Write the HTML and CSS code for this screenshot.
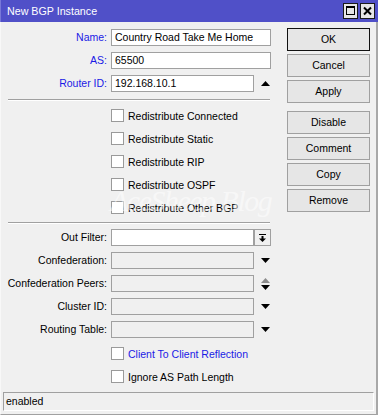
FILE: index.html
```html
<!DOCTYPE html>
<html>
<head>
<meta charset="utf-8">
<link rel="stylesheet" href="styles.css">
</head>
<body>
<div class="window">
  <div class="titlebar">
    <span class="title">New BGP Instance</span>
    <div class="tbtns">
      <span class="tbtn"><svg width="13" height="14" viewBox="0 0 13 14"><rect x="2.5" y="3.5" width="8" height="7" fill="none" stroke="#000" stroke-width="1"/><line x1="2" y1="3" x2="11" y2="3" stroke="#000" stroke-width="2"/></svg></span>
      <span class="tbtn"><svg width="13" height="14" viewBox="0 0 13 14"><path d="M3 3.5 L10 10.5 M10 3.5 L3 10.5" stroke="#000" stroke-width="2"/></svg></span>
    </div>
  </div>
  <div class="frame">
    <div class="body">
      <div class="form">
        <div class="grid">
          <span class="lbl req">Name:</span><div class="field wide">Country Road Take Me Home</div>
          <span class="lbl req">AS:</span><div class="field wide">65500</div>
          <span class="lbl req">Router ID:</span><div class="field">192.168.10.1</div>
          <span class="ico"><svg width="11" height="7" viewBox="0 0 11 7"><path d="M1 6 L5.5 1 L10 6 Z" fill="#000"/></svg></span>
        </div>
        <div class="sep sep1"></div>
        <div class="grid">
          <span></span><span class="chk wide"><span class="box"></span>Redistribute Connected</span>
          <span></span><span class="chk wide"><span class="box"></span>Redistribute Static</span>
          <span></span><span class="chk wide"><span class="box"></span>Redistribute RIP</span>
          <span></span><span class="chk wide"><span class="box"></span>Redistribute OSPF</span>
          <span></span><span class="chk wide"><span class="box"></span>Redistribute Other BGP</span>
        </div>
        <div class="sep sep2"></div>
        <div class="grid">
          <span class="lbl">Out Filter:</span><div class="field"></div>
          <span class="dropbtn"><svg width="9" height="10" viewBox="0 0 9 10"><rect x="1" y="1" width="7" height="1" fill="#000"/><rect x="3.5" y="3" width="2" height="3" fill="#000"/><path d="M1 5.5 L8 5.5 L4.5 9 Z" fill="#000"/></svg></span>
          <span class="lbl">Confederation:</span><div class="field dis"></div>
          <span class="ico"><svg width="11" height="7" viewBox="0 0 11 7"><path d="M1 1 L10 1 L5.5 6 Z" fill="#000"/></svg></span>
          <span class="lbl">Confederation Peers:</span><div class="field dis"></div>
          <span class="ico"><svg width="11" height="14" viewBox="0 0 11 14"><path d="M1 6 L5.5 1 L10 6 Z" fill="#8c8c8c"/><path d="M1 8 L10 8 L5.5 13 Z" fill="#000"/></svg></span>
          <span class="lbl">Cluster ID:</span><div class="field dis"></div>
          <span class="ico"><svg width="11" height="7" viewBox="0 0 11 7"><path d="M1 1 L10 1 L5.5 6 Z" fill="#000"/></svg></span>
          <span class="lbl">Routing Table:</span><div class="field dis"></div>
          <span class="ico"><svg width="11" height="7" viewBox="0 0 11 7"><path d="M1 1 L10 1 L5.5 6 Z" fill="#000"/></svg></span>
        </div>
        <div class="grid grid-last">
          <span></span><span class="chk wide req"><span class="box"></span>Client To Client Reflection</span>
          <span></span><span class="chk wide"><span class="box"></span>Ignore AS Path Length</span>
        </div>
      </div>
      <div class="buttons">
        <div class="btngroup">
          <div class="btn default">OK</div>
          <div class="btn">Cancel</div>
          <div class="btn">Apply</div>
        </div>
        <div class="btngroup group2">
          <div class="btn">Disable</div>
          <div class="btn">Comment</div>
          <div class="btn">Copy</div>
          <div class="btn">Remove</div>
        </div>
      </div>
    </div>
    <div class="status">enabled</div>
  </div>
  <div class="watermark">AceSheep Blog</div>
</div>
</body>
</html>
```
FILE: styles.css
```css
* { box-sizing: border-box; }
html, body { margin: 0; padding: 0; }
body {
  font-family: "Liberation Sans", Arial, sans-serif;
  font-size: 10.5px;
  color: #000;
  background: #f0f0f0;
}
.window {
  position: relative;
  width: 378px;
  height: 415px;
  display: flex;
  flex-direction: column;
  background: #f0f0f0;
}
.titlebar {
  height: 22px;
  background: #5050c8;
  color: #fff;
  display: flex;
  align-items: center;
  justify-content: space-between;
  padding: 0 3px 0 6px;
  border-left: 1px solid #7878d8;
}
.title { font-size: 10.7px; }
.tbtns { display: flex; gap: 2px; align-self: flex-start; margin-top: 3px; }
.tbtn {
  width: 15px;
  height: 16px;
  background: #e6e6e6;
  border: 1px solid #1a1a1a;
  display: flex;
  align-items: center;
  justify-content: center;
}
.tbtn svg { display: block; }
.frame {
  flex: 1;
  display: flex;
  flex-direction: column;
  border-left: 1px solid #f8f8f8;
  border-right: 2px solid #a8a8a8;
  border-bottom: 1px solid #a0a0a0;
}
.body {
  flex: 1;
  display: flex;
  padding: 6px 0 0 6px;
}
.form { width: 264px; margin-top: 1px; }
.grid {
  display: grid;
  grid-template-columns: 104px 143px 17px;
  grid-auto-rows: 17px;
  row-gap: 6px;
}
.grid-last { margin-top: 7px; }
.lbl {
  text-align: right;
  padding-right: 4px;
  line-height: 17px;
  white-space: nowrap;
}
.req { color: #1a1ae6; }
.field {
  background: #fff;
  border: 1px solid #a0a0a0;
  line-height: 15px;
  padding-left: 3px;
  white-space: nowrap;
  overflow: hidden;
}
.field.wide { grid-column: 2 / 4; }
.field.dis { background: #f0f0f0; }
.ico {
  display: flex;
  align-items: center;
  justify-content: flex-end;
}
.ico svg { display: block; }
.dropbtn {
  border: 1px solid #a0a0a0;
  background: #f0f0f0;
  display: flex;
  align-items: center;
  justify-content: center;
}
.dropbtn svg { display: block; }
.chk {
  display: flex;
  align-items: center;
  gap: 4px;
  white-space: nowrap;
}
.chk.wide { grid-column: 2 / 4; }
.box {
  width: 13px;
  height: 13px;
  background: #fff;
  border: 1px solid #9a9a9a;
  flex: none;
}
.sep {
  height: 2px;
  margin-left: 1px;
  margin-right: 1px;
  border-top: 1px solid #a0a0a0;
  border-bottom: 1px solid #ffffff;
}
.sep1 { margin-top: 7px; margin-bottom: 6px; }
.sep2 { margin-top: 6px; margin-bottom: 5px; }
.buttons {
  margin-left: 16px;
  width: 83px;
  display: flex;
  flex-direction: column;
}
.btngroup { display: flex; flex-direction: column; gap: 3px; }
.group2 { margin-top: 8px; }
.btn {
  height: 23px;
  border: 1px solid #a0a0a0;
  background: #e6e6e6;
  text-align: center;
  line-height: 21px;
  font-size: 10.5px;
}
.btn.default { border: 1px solid #111; }
.status {
  margin: 0 2px 3px 2px;
  height: 19px;
  border-top: 1px solid #a0a0a0;
  border-left: 1px solid #a0a0a0;
  border-right: 1px solid #fff;
  border-bottom: 1px solid #fff;
  line-height: 17px;
  padding-left: 2px;
}
.watermark {
  position: absolute;
  left: 110px;
  top: 184px;
  font-family: "Liberation Serif", serif;
  font-style: italic;
  font-size: 30px;
  letter-spacing: -1.5px;
  color: rgba(255, 255, 255, 0.5);
  white-space: nowrap;
  pointer-events: none;
}
```
